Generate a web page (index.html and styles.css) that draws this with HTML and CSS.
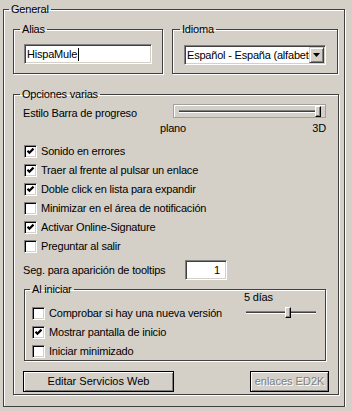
FILE: index.html
```html
<!DOCTYPE html>
<html lang="es">
<head>
    <meta charset="UTF-8">
    <title>Opciones generales</title>
    <link rel="stylesheet" href="styles.css">
</head>
<body>
    <fieldset class="group general">
        <legend>General</legend>

        <div class="top-row">
            <fieldset class="group alias-box">
                <legend>Alias</legend>
                <div class="textbox">HispaMule<span class="caret"></span></div>
            </fieldset>
            <fieldset class="group lang-box">
                <legend>Idioma</legend>
                <div class="combo">
                    <span class="combo-text">Español - España (alfabeto tradicional)</span>
                    <span class="combo-btn">
                        <svg width="7" height="4" viewBox="0 0 7 4"><polygon points="0,0 7,0 3.5,4" fill="#000"/></svg>
                    </span>
                </div>
            </fieldset>
        </div>

        <!-- Opciones varias -->
        <fieldset class="group options-box">
            <legend>Opciones varias</legend>

            <div class="progress-row">
                <span class="progress-label">Estilo Barra de progreso</span>
                <div class="progress-control">
                    <div class="slider framed">
                        <div class="track"></div>
                        <div class="thumb" style="left: 141px"></div>
                    </div>
                    <div class="slider-labels"><span>plano</span><span>3D</span></div>
                </div>
            </div>

            <div class="checks main-checks">
                <div class="check"><span class="box"><svg width="9" height="9" viewBox="0 0 9 9"><polyline points="1.5,3.8 3.4,5.7 7.5,1.6" fill="none" stroke="#000" stroke-width="2.2"/></svg></span>Sonido en errores</div>
                <div class="check"><span class="box"><svg width="9" height="9" viewBox="0 0 9 9"><polyline points="1.5,3.8 3.4,5.7 7.5,1.6" fill="none" stroke="#000" stroke-width="2.2"/></svg></span>Traer al frente al pulsar un enlace</div>
                <div class="check"><span class="box"><svg width="9" height="9" viewBox="0 0 9 9"><polyline points="1.5,3.8 3.4,5.7 7.5,1.6" fill="none" stroke="#000" stroke-width="2.2"/></svg></span>Doble click en lista para expandir</div>
                <div class="check"><span class="box"></span>Minimizar en el área de notificación</div>
                <div class="check"><span class="box"><svg width="9" height="9" viewBox="0 0 9 9"><polyline points="1.5,3.8 3.4,5.7 7.5,1.6" fill="none" stroke="#000" stroke-width="2.2"/></svg></span>Activar Online-Signature</div>
                <div class="check"><span class="box"></span>Preguntar al salir</div>
            </div>

            <div class="tooltip-row">
                <span class="tooltip-label">Seg. para aparición de tooltips</span>
                <div class="numbox">1</div>
            </div>

            <fieldset class="group start-box">
                <legend>Al iniciar</legend>
                <div class="start-grid">
                    <div class="checks start-checks">
                        <div class="check"><span class="box"></span>Comprobar si hay una nueva versión</div>
                        <div class="check"><span class="box"><svg width="9" height="9" viewBox="0 0 9 9"><polyline points="1.5,3.8 3.4,5.7 7.5,1.6" fill="none" stroke="#000" stroke-width="2.2"/></svg></span>Mostrar pantalla de inicio</div>
                        <div class="check"><span class="box"></span>Iniciar minimizado</div>
                    </div>
                    <div class="days">
                        <span class="days-label">5 días</span>
                        <div class="slider small">
                            <div class="track"></div>
                            <div class="thumb" style="left: 39px"></div>
                        </div>
                    </div>
                </div>
            </fieldset>

            <div class="buttons">
                <button class="btn web-btn">Editar Servicios Web</button>
                <button class="btn ed2k-btn" disabled>enlaces ED2K</button>
            </div>
        </fieldset>
    </fieldset>
</body>
</html>
```

FILE: styles.css
```css
body {
    margin: 0;
    background-color: #d4d0c8;
    font-family: "Liberation Sans", Arial, sans-serif;
    font-size: 11px;
    line-height: 13px;
    letter-spacing: -0.2px;
    color: #000;
}
.group {
    box-sizing: border-box;
    margin: 0;
    min-width: 0;
    border: 1px solid #404040;
    box-shadow: inset 1px 1px 0 #fff, 1px 1px 0 #fff;
}
.group legend {
    padding: 0 2px;
    line-height: 13px;
}
.general {
    width: 342px;
    margin: 3px 0 0 3px;
    padding: 7px 5px 11px 9px;
}
.general > legend {
    margin-left: -4px;
}
.top-row {
    display: flex;
    gap: 9px;
}
.alias-box {
    width: 150px;
    padding: 8px 0 9px 10px;
}
.alias-box legend {
    margin-left: -4px;
}
.lang-box {
    width: 166px;
    padding: 9px 0 8px 11px;
}
.lang-box legend {
    margin-left: -4px;
}
.textbox {
    box-sizing: border-box;
    width: 128px;
    height: 20px;
    padding-left: 2px;
    background: #fff;
    border: 1px solid;
    border-color: #808080 #fff #fff #808080;
    box-shadow: inset 1px 1px 0 #404040, inset -1px -1px 0 #d4d0c8;
    line-height: 18px;
    display: flex;
    align-items: center;
}
.caret {
    display: inline-block;
    width: 1px;
    height: 13px;
    background: #000;
    margin-left: 1px;
}
.combo {
    box-sizing: border-box;
    width: 142px;
    height: 20px;
    display: flex;
    align-items: center;
    padding: 0 1px 0 2px;
    background: #fff;
    border: 1px solid;
    border-color: #808080 #fff #fff #808080;
    box-shadow: inset 1px 1px 0 #404040, inset -1px -1px 0 #d4d0c8;
}
.combo-text {
    flex: 1;
    min-width: 0;
    overflow: hidden;
    white-space: nowrap;
}
.combo-btn {
    box-sizing: border-box;
    width: 15px;
    height: 16px;
    display: flex;
    align-items: center;
    justify-content: center;
    background: #d4d0c8;
    border: 1px solid;
    border-color: #d4d0c8 #404040 #404040 #d4d0c8;
    box-shadow: inset 1px 1px 0 #fff, inset -1px -1px 0 #808080;
}
.options-box {
    width: 326px;
    margin-top: 14px;
    padding: 3px 9px 2px 9px;
}
.options-box > legend {
    margin-left: -3px;
}
.progress-row {
    display: flex;
    justify-content: space-between;
}
.progress-label {
    padding-top: 3px;
}
.progress-control {
    width: 166px;
    margin-right: 3px;
    display: flex;
    flex-direction: column;
    align-items: flex-end;
}
.slider {
    position: relative;
}
.slider.framed {
    box-sizing: border-box;
    width: 153px;
    height: 14px;
    padding: 5px 4px 0 5px;
    border: 1px solid #a0a0a0;
    box-shadow: inset 1px 1px 0 #fff;
}
.track {
    height: 1px;
    border-top: 1px solid #808080;
    border-bottom: 1px solid #fff;
    background: #404040;
}
.thumb {
    position: absolute;
    top: 1px;
    width: 4px;
    height: 9px;
    background: #d4d0c8;
    border: 1px solid;
    border-color: #fff #000 #000 #fff;
    box-shadow: inset -1px -1px 0 #808080;
}
.slider-labels {
    align-self: stretch;
    display: flex;
    justify-content: space-between;
    margin-top: 4px;
}
.checks {
    display: flex;
    flex-direction: column;
    gap: 6px;
}
.main-checks {
    margin-top: 10px;
    padding-left: 1px;
}
.check {
    display: flex;
    align-items: center;
    height: 13px;
    white-space: nowrap;
}
.box {
    box-sizing: border-box;
    width: 13px;
    height: 13px;
    margin-right: 4px;
    display: flex;
    align-items: center;
    justify-content: center;
    background: #fff;
    border: 1px solid;
    border-color: #808080 #fff #fff #808080;
    box-shadow: inset 1px 1px 0 #000, inset -1px -1px 0 #d4d0c8;
}
.tooltip-row {
    display: flex;
    align-items: center;
    margin-top: 7px;
    height: 20px;
}
.tooltip-label {
    width: 162px;
}
.numbox {
    box-sizing: border-box;
    width: 42px;
    height: 20px;
    padding-right: 6px;
    text-align: right;
    line-height: 18px;
    background: #fff;
    border: 1px solid;
    border-color: #808080 #fff #fff #808080;
    box-shadow: inset 1px 1px 0 #404040, inset -1px -1px 0 #d4d0c8;
}
.start-box {
    width: 302px;
    margin: 3px 3px 0 1px;
    padding: 0 9px 2px 7px;
}
.start-box legend {
    margin-left: -2px;
}
.start-grid {
    display: flex;
    justify-content: space-between;
}
.start-checks {
    padding-top: 11px;
}
.days {
    width: 70px;
    margin-top: -5px;
    display: flex;
    flex-direction: column;
}
.days-label {
    margin-left: -2px;
}
.slider.small {
    height: 11px;
    margin-top: 3px;
    padding-top: 4px;
    box-sizing: border-box;
}
.slider.small .thumb {
    top: 0;
}
.buttons {
    display: flex;
    justify-content: space-between;
    margin-top: 10px;
}
.btn {
    box-sizing: border-box;
    height: 21px;
    padding: 0;
    font: inherit;
    color: #000;
    background: #d4d0c8;
    border: 1px solid #000;
    box-shadow: inset 1px 1px 0 #fff, inset -1px -1px 0 #808080;
}
.web-btn {
    width: 151px;
}
.ed2k-btn {
    width: 79px;
    color: #808080;
    text-shadow: 1px 1px 0 #fff;
}
```
